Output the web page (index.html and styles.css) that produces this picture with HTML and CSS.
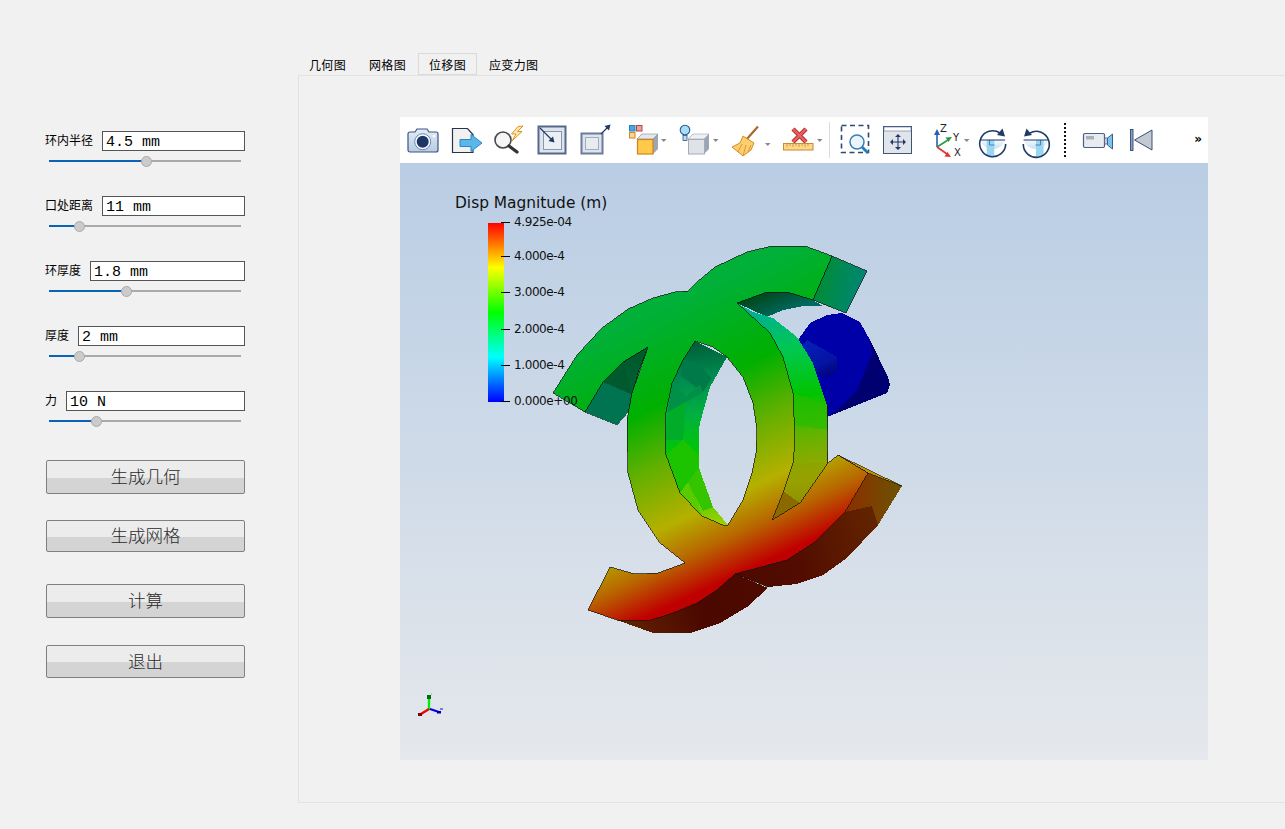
FILE: index.html
```html
<!DOCTYPE html>
<html lang="zh">
<head>
<meta charset="utf-8">
<title>位移图</title>
<link rel="stylesheet" href="styles.css">
</head>
<body>
<div class="app">
  <aside class="panel">
    <div class="param">
      <div class="param-head"><label class="param-label">环内半径</label><div class="value">4.5 mm</div></div>
      <div class="slider"><div class="slider-fill" style="width:97px"></div><div class="slider-knob" style="left:97px"></div></div>
    </div>
    <div class="param">
      <div class="param-head"><label class="param-label">口处距离</label><div class="value">11 mm</div></div>
      <div class="slider"><div class="slider-fill" style="width:30.5px"></div><div class="slider-knob" style="left:30.5px"></div></div>
    </div>
    <div class="param">
      <div class="param-head"><label class="param-label">环厚度</label><div class="value">1.8 mm</div></div>
      <div class="slider"><div class="slider-fill" style="width:77px"></div><div class="slider-knob" style="left:77px"></div></div>
    </div>
    <div class="param">
      <div class="param-head"><label class="param-label">厚度</label><div class="value">2 mm</div></div>
      <div class="slider"><div class="slider-fill" style="width:30.5px"></div><div class="slider-knob" style="left:30.5px"></div></div>
    </div>
    <div class="param">
      <div class="param-head"><label class="param-label">力</label><div class="value">10 N</div></div>
      <div class="slider"><div class="slider-fill" style="width:47.5px"></div><div class="slider-knob" style="left:47.5px"></div></div>
    </div>
    <button class="action action-geo">生成几何</button>
    <button class="action action-mesh">生成网格</button>
    <button class="action action-calc">计算</button>
    <button class="action action-quit">退出</button>
  </aside>

  <main class="tabs">
    <nav class="tab-bar">
      <div class="tab">几何图</div>
      <div class="tab">网格图</div>
      <div class="tab tab-active">位移图</div>
      <div class="tab tab-last">应变力图</div>
    </nav>
    <section class="pane">
      <div class="viewer">
        <div class="toolbar">
          <div class="tool">
            <svg width="43" height="46" viewBox="0 0 43 46"><defs><linearGradient id="camBody" x1="0" y1="0" x2="0" y2="1"><stop offset="0" stop-color="#e4edf7"/><stop offset="1" stop-color="#b7cbe3"/></linearGradient></defs><path d="M9 15h5l2-3h10l2 3h7a2 2 0 0 1 2 2v16a2 2 0 0 1-2 2H9a2 2 0 0 1-2-2V17a2 2 0 0 1 2-2z" fill="url(#camBody)" stroke="#3a5580" stroke-width="1.200"/><circle cx="21.700" cy="24.700" r="8" fill="#fff" stroke="#6585b0"/><circle cx="21.700" cy="24.700" r="6" fill="#1b3768"/><circle cx="33" cy="19" r="1.300" fill="#fff"/></svg>
          </div>
          <div class="tool">
            <svg width="43" height="46" viewBox="0 0 43 46"><path d="M8.500 11.500h15l5.500 6v18h-20.500z" fill="#f1f1f1" stroke="#26344c" stroke-width="1.200"/><path d="M16 22.500h11v-5l11 8.500-11 8.500v-5h-11z" fill="#5bb7ea" stroke="#2a86c8"/></svg>
          </div>
          <div class="tool">
            <svg width="43" height="46" viewBox="0 0 43 46"><path d="M31 9.500l-6.500 7.500h4.500l-4 7 10-9.500h-4.500l5.500-5.500z" fill="#ffe9a8" stroke="#e0922a" stroke-width="1"/><circle cx="16" cy="23" r="8" fill="#f6f6f6" stroke="#484848" stroke-width="1.600"/><path d="M22 29l8 6" stroke="#333" stroke-width="3.200" stroke-linecap="round"/></svg>
          </div>
          <div class="tool">
            <svg width="43" height="46" viewBox="0 0 43 46"><rect x="8.500" y="9.500" width="27" height="27" fill="#dfe4ea" stroke="#55688c" stroke-width="2"/><rect x="13.500" y="14.500" width="18" height="18" fill="#eceff3" stroke="#8797b0"/><path d="M10 11l12 12" stroke="#1f3a68" stroke-width="1.200"/><path d="M24.500 25.500l-6-1.500 4.500-4.500z" fill="#1f3a68"/></svg>
          </div>
          <div class="tool">
            <svg width="43" height="46" viewBox="0 0 43 46"><rect x="8.500" y="16.500" width="21" height="20" fill="#dfe4ea" stroke="#6a7c9c" stroke-width="2"/><rect x="12.500" y="20.500" width="13" height="12" fill="#e8ebef" stroke="#a0acbe"/><path d="M28 17l7-7" stroke="#1f3a68" stroke-width="1.200"/><path d="M37.500 7.500l-1.500 6-4.500-4.500z" fill="#1f3a68"/></svg>
          </div>
          <div class="tool tool-wide">
            <svg width="52" height="46" viewBox="0 0 52 46"><rect x="13.500" y="8.500" width="5.500" height="5.500" fill="#4aa8e0" stroke="#2f7fb8"/><rect x="20.500" y="8.500" width="5.500" height="5.500" fill="#e8a0a0" stroke="#b04848"/><rect x="13.500" y="15.500" width="5.500" height="5.500" fill="#fbd38a" stroke="#c98a30"/><path d="M21 22l5-5h16v15l-5 5z" fill="#9aa6b4"/><path d="M21 22l5-5h16l-5 5z" fill="#e4e8ee" stroke="#7a8698" stroke-width=".6"/><rect x="21.500" y="22.500" width="15.500" height="14.500" fill="#ffc94a" stroke="#d5801e" stroke-width="1.200"/><path d="M45 22h5.500l-2.750 3z" fill="#888"/></svg>
          </div>
          <div class="tool tool-wide">
            <svg width="52" height="46" viewBox="0 0 52 46"><path d="M20 22l5-5h16v15l-5 5z" fill="#9aa6b4"/><path d="M20 22l5-5h16l-5 5z" fill="#eef0f3" stroke="#9aa6b4" stroke-width=".6"/><rect x="20.500" y="22.500" width="16" height="14.500" fill="#dfe2e7" stroke="#a2abb8"/><circle cx="17" cy="13" r="4.800" fill="#a9ddf5" stroke="#1f5b8f" stroke-width="1.100"/><rect x="15" y="18.500" width="4" height="5" fill="#cfd6de" stroke="#1f5b8f" stroke-width=".8"/><path d="M45 22h5.500l-2.750 3z" fill="#888"/></svg>
          </div>
          <div class="tool tool-wide">
            <svg width="52" height="46" viewBox="0 0 52 46"><path d="M38 9.500L26 23" stroke="#a8682a" stroke-width="2.200"/><path d="M23 19l11 7-3 7-8 6-11-9 8-4z" fill="#fbcf6e" stroke="#d88a28"/><path d="M23 39l3-11M18 35l4-8M28 35l3-7" stroke="#d88a28" stroke-width=".8"/><path d="M45 26h5.500l-2.750 3z" fill="#888"/></svg>
          </div>
          <div class="tool tool-wide">
            <svg width="52" height="46" viewBox="0 0 52 46"><path d="M21 12l13 13M34 12L21 25" stroke="#b83030" stroke-width="4.400"/><path d="M21 12l13 13M34 12L21 25" stroke="#e86060" stroke-width="2.400"/><rect x="11.500" y="26.500" width="29.500" height="6.500" fill="#fbd88c" stroke="#c98a30"/><path d="M15 27v3M18 27v2M21 27v3M24 27v2M27 27v3M30 27v2M33 27v3M36 27v2" stroke="#c98a30" stroke-width=".8"/><path d="M45 22h5.500l-2.750 3z" fill="#888"/></svg>
          </div>
          <div class="sep"></div>
          <div class="tool">
            <svg width="43" height="46" viewBox="0 0 43 46"><rect x="8.500" y="8.500" width="27" height="27" fill="none" stroke="#2f4a72" stroke-width="1.600" stroke-dasharray="5 3.500"/><circle cx="24" cy="25" r="7" fill="#eaf5fb" stroke="#3a7fb5" stroke-width="1.500"/><path d="M29 30l6 6" stroke="#2a7dbb" stroke-width="2.800"/></svg>
          </div>
          <div class="tool">
            <svg width="43" height="46" viewBox="0 0 43 46"><rect x="7.500" y="9.500" width="28" height="27" fill="#e1e5eb" stroke="#3f5578"/><rect x="8" y="10" width="27" height="4" fill="#fff" stroke="#5f7396" stroke-width=".6"/><path d="M22 18v14M15 25h14" stroke="#1f3a68" stroke-width="1.100"/><path d="M22 17l-3 3h6zM22 33l-3-3h6zM14 25l3-3v6zM30 25l-3-3v6z" fill="#1f3a68"/></svg>
          </div>
          <div class="tool tool-axes">
            <svg width="46" height="46" viewBox="0 0 46 46"><path d="M12 30V16" stroke="#2a5fb0" stroke-width="1.600"/><path d="M12 12l-3 6h6z" fill="#2a5fb0"/><path d="M12 30l11-7" stroke="#2a9a4a" stroke-width="1.600"/><path d="M27 20l-6.500.5 3 4.500z" fill="#2a9a4a"/><path d="M12 30l10 7" stroke="#e03030" stroke-width="1.600"/><path d="M26 40l-6.500-.5 3-4.500z" fill="#e03030"/><text class="axis-letter" x="15" y="14.500">Z</text><text class="axis-letter" x="28" y="24">Y</text><text class="axis-letter" x="29" y="39">X</text><path d="M39 22h5.500l-2.750 3z" fill="#888"/></svg>
          </div>
          <div class="tool tool-rot">
            <svg width="44" height="46" viewBox="0 0 44 46"><defs><linearGradient id="rotFill" x1="0" y1="0" x2="0" y2="1"><stop offset="0" stop-color="#f4fafd"/><stop offset="1" stop-color="#c4e3f4"/></linearGradient></defs><path d="M9.300 23a13 13 0 0 0 24.800 0z" fill="url(#rotFill)"/><path d="M15.700 23h7.600v16.900a13 13 0 0 1-7.600-1.700z" fill="#9ad6f2"/><path d="M18.500 23v5h5" fill="none" stroke="#2f6fa8" stroke-width=".8"/><path d="M29 16A13 13 0 1 0 34.700 27" fill="none" stroke="#1f3a68" stroke-width="1.600"/><path d="M9.300 23h24.800" stroke="#1f3a68" stroke-width="1"/><path d="M34 19.500l-8-1.500 5.500-6.500z" fill="#1f3a68"/></svg>
          </div>
          <div class="tool tool-rot">
            <svg width="44" height="46" viewBox="0 0 44 46"><path d="M8.600 23a13 13 0 0 0 24.800 0z" fill="url(#rotFill)"/><path d="M21 23h7.600v15.200a13 13 0 0 1-7.600 1.700z" fill="#9ad6f2"/><path d="M25.500 23v5h-5" fill="none" stroke="#2f6fa8" stroke-width=".8"/><path d="M15 16A13 13 0 1 1 8.300 27" fill="none" stroke="#1f3a68" stroke-width="1.600"/><path d="M8.600 23h24.800" stroke="#1f3a68" stroke-width="1"/><path d="M9 19.500l8-1.500-5.500-6.500z" fill="#1f3a68"/></svg>
          </div>
          <div class="sep-dotted"></div>
          <div class="tool tool-cam">
            <svg width="43" height="46" viewBox="0 0 43 46"><rect x="7.500" y="16.500" width="21" height="14" rx="1.500" fill="#e8ebf0" stroke="#4a5f82" stroke-width="1.200"/><rect x="10" y="19" width="8" height="3.500" fill="#a8b0bc"/><rect x="28.500" y="21" width="3" height="6" fill="#c4ccd8" stroke="#4a5f82" stroke-width=".8"/><path d="M31.500 21l5-4v15l-5-4z" fill="#7cc4ec" stroke="#3a5f92"/></svg>
          </div>
          <div class="tool">
            <svg width="43" height="46" viewBox="0 0 43 46"><rect x="11.500" y="12.500" width="2.500" height="21" fill="#8ba0c0" stroke="#2f4a72" stroke-width=".9"/><path d="M33 13L15.500 23 33 33z" fill="#c2c9d3" stroke="#3a5278"/></svg>
          </div>
          <div class="more">»</div>
        </div>
        <div class="viewport">
          <svg class="scene" width="808" height="597" viewBox="400 163 808 597">
            <defs>
              <linearGradient id="face" gradientUnits="userSpaceOnUse" x1="235" y1="508" x2="378" y2="816">
                <stop offset="0" stop-color="#00b038"/>
                <stop offset=".25" stop-color="#00b000"/>
                <stop offset=".41" stop-color="#60b000"/>
                <stop offset=".585" stop-color="#b5b000"/>
                <stop offset=".69" stop-color="#b86800"/>
                <stop offset=".8" stop-color="#c00000"/>
                <stop offset="1" stop-color="#a00000"/>
              </linearGradient>
              <linearGradient id="bar" x1="0" y1="1" x2="0" y2="0">
                <stop offset="0" stop-color="#0000ff"/>
                <stop offset=".25" stop-color="#00ffff"/>
                <stop offset=".5" stop-color="#00ff00"/>
                <stop offset=".75" stop-color="#ffff00"/>
                <stop offset="1" stop-color="#ff0000"/>
              </linearGradient>
              <linearGradient id="cap" gradientUnits="userSpaceOnUse" x1="820" y1="280" x2="860" y2="290">
                <stop offset="0" stop-color="#008c38"/>
                <stop offset="1" stop-color="#008672"/>
              </linearGradient>
              <linearGradient id="under" gradientUnits="userSpaceOnUse" x1="770" y1="292" x2="780" y2="316">
                <stop offset="0" stop-color="#004a20"/>
                <stop offset="1" stop-color="#006a60"/>
              </linearGradient>
              <linearGradient id="leftwall" gradientUnits="userSpaceOnUse" x1="625" y1="355" x2="610" y2="425">
                <stop offset="0" stop-color="#005a2a"/>
                <stop offset=".55" stop-color="#00603a"/>
                <stop offset="1" stop-color="#008062"/>
              </linearGradient>
              <linearGradient id="innerwall" gradientUnits="userSpaceOnUse" x1="690" y1="345" x2="710" y2="525">
                <stop offset="0" stop-color="#00603a"/>
                <stop offset=".18" stop-color="#008a50"/>
                <stop offset=".38" stop-color="#00b040"/>
                <stop offset=".6" stop-color="#00c800"/>
                <stop offset=".85" stop-color="#50cc00"/>
                <stop offset="1" stop-color="#a0d000"/>
              </linearGradient>
              <linearGradient id="rightwall" gradientUnits="userSpaceOnUse" x1="765" y1="310" x2="790" y2="520">
                <stop offset="0" stop-color="#00b090"/>
                <stop offset=".2" stop-color="#00c850"/>
                <stop offset=".42" stop-color="#00c400"/>
                <stop offset=".6" stop-color="#60b400"/>
                <stop offset=".82" stop-color="#a4a400"/>
                <stop offset="1" stop-color="#806000"/>
              </linearGradient>
              <linearGradient id="shadow" gradientUnits="userSpaceOnUse" x1="620" y1="600" x2="900" y2="500">
                <stop offset="0" stop-color="#602000"/>
                <stop offset=".25" stop-color="#4a0800"/>
                <stop offset=".6" stop-color="#520c00"/>
                <stop offset="1" stop-color="#682c00"/>
              </linearGradient>
              <linearGradient id="endcap" gradientUnits="userSpaceOnUse" x1="850" y1="495" x2="895" y2="495">
                <stop offset="0" stop-color="#8a3000"/>
                <stop offset="1" stop-color="#6e5000"/>
              </linearGradient>
              <linearGradient id="hub" gradientUnits="userSpaceOnUse" x1="812" y1="340" x2="830" y2="378">
                <stop offset="0" stop-color="#0420b8"/>
                <stop offset=".6" stop-color="#0414a4"/>
                <stop offset="1" stop-color="#00007a"/>
              </linearGradient>
            </defs>

            <g class="mesh">
              <polygon points="798,340 810,323 827,315 842,313 860,322 870,340 888,377 890,385 887,393 827,417" fill="#0000a8"/>
              <polygon points="870,340 872,355 857,390 840,408 827,417 887,393 890,385 888,377" fill="#000070"/>
              <polygon points="807,340 837,357 837,370 827,378 817,373 802,345" fill="url(#hub)"/>

              <polygon points="832,256 867,271 846,313 813,300" fill="url(#cap)" stroke="#111" stroke-width=".7"/>
              <polygon points="737,303 767,292 787,292 813,300 823,306 803,306 783,310 767,317" fill="url(#under)"/>

              <polygon points="585,412 603,382 623,362 648,347 638,373 631,400 628,412 617,425" fill="url(#leftwall)" stroke="#111" stroke-width=".7"/>
              <polygon points="603,382 631,394 628,412 617,425 585,412" fill="#007450"/>
              <polygon points="603,382 623,362 632,394" fill="#005a2e"/>

              <polygon points="695,341 727,357 710,387 700,423 699,430 699,468 713,507 728,525 725,526 702,516 680,493 666,455 665,430 665,417 672,383 683,360" fill="url(#innerwall)"/>
              <polygon points="683,360 695,362 712,378 703,392 681,376" fill="#007a48"/>
              <polygon points="672,383 686,396 700,385 703,392 686,402 668,412" fill="#009048"/>
              <polygon points="668,412 686,402 683,440 665,440" fill="#00ac28"/>
              <polygon points="666,455 683,440 699,455 699,468 688,482 680,493" fill="#1cc400"/>
              <polygon points="680,493 688,482 702,516" fill="#58cc00"/>
              <polygon points="688,482 699,468 713,507 703,511" fill="#34c400"/>

              <polygon points="737,303 753,312 773,318 797,337 813,363 827,405 827,440 828,463 800,503 772,520 783,493 793,463 795,440 793,393 783,357 770,333" fill="url(#rightwall)"/>
              <polygon points="793,393 827,405 828,430 795,425" fill="#28bc00" opacity=".7"/>
              <polygon points="793,463 828,463 800,503 784,492" fill="#90a000" opacity=".6"/>
              <polygon points="784,492 800,503 772,520" fill="#8a6a00"/>
              <path d="M827 405V463" fill="none" stroke="#111" stroke-width=".8"/>

              <polygon points="617,620 653,633 690,633 720,623 747,607 768,588 735,574" fill="url(#shadow)"/>
              <polygon points="735,574 768,587 797,584 823,575 847,558 878,525 902,486 868,473 845,512 815,542 787,560" fill="url(#shadow)"/>
              <polygon points="868,473 902,486 878,525 872,506 845,512" fill="url(#endcap)"/>
              <polygon points="838,455 868,473 902,486" fill="#c09400" stroke="#111" stroke-width=".6"/>
              <path d="M735 574l33 13" fill="none" stroke="#111" stroke-width=".6"/>

              <path class="front" fill="url(#face)" fill-rule="evenodd" d="M553 393L577 355 602 328 628 309 653 298 675 292 688 291 697 282 715 267 747 252 772 246 805 246 832 256 813 300 787 292 767 292 737 303 770 333 783 357 793 393 795 440 793 463 783 493 772 520 800 503 828 463 838 455 868 473 845 512 815 542 787 560 735 574 717 590 697 603 673 613 648 621 617 620 588 610 610 567 635 574 658 573 685 563 660 543 638 510 628 473 627 430 627 420 632 393 648 347 623 362 603 382 585 412Z M695 341L713 347 727 357 743 377 753 403 756 423 757 430 756 453 752 473 743 500 728 525 725 526 702 516 680 493 666 455 665 430 665 417 672 383 683 360Z"/>
            </g>

            <text class="legend-title" x="455" y="208">Disp Magnitude (m)</text>
            <rect x="488" y="223" width="16" height="179" fill="url(#bar)"/>
            <path d="M501 222.500h9M501 256.500h9M501 292.500h9M501 329.500h9M501 365.500h9M501 401.500h9" stroke="#000" stroke-width="1"/>
            <text class="legend-label" x="514" y="226">4.925e-04</text>
            <text class="legend-label" x="514" y="260">4.000e-4</text>
            <text class="legend-label" x="514" y="296">3.000e-4</text>
            <text class="legend-label" x="514" y="333">2.000e-4</text>
            <text class="legend-label" x="514" y="369">1.000e-4</text>
            <text class="legend-label" x="514" y="405">0.000e+00</text>

            <g class="orient">
              <path d="M429 710V698" stroke="#00ee00" stroke-width="2.400"/>
              <path d="M427 699v-4h4v4z" fill="#006a10"/>
              <path d="M431 694h1" stroke="#30e030"/>
              <path d="M429 709l-8 5" stroke="#ee0000" stroke-width="2.400"/>
              <path d="M418 713h4v3h-4z" fill="#800000"/>
              <path d="M430 709l9 3" stroke="#0000ee" stroke-width="2.200"/>
              <path d="M437 711h4v2.500h-4z" fill="#0000a0"/>
              <path d="M440 709h3" stroke="#1010d0"/>
            </g>
          </svg>
        </div>
      </div>
    </section>
  </main>
</div>
</body>
</html>
```
FILE: styles.css
```css
* { box-sizing: border-box; }

html, body {
  margin: 0;
  height: 100%;
  background: #f1f1f1;
  overflow: hidden;
}

.app {
  display: flex;
  width: 1285px;
  height: 829px;
  font-family: "Noto Sans CJK SC", "Liberation Sans", sans-serif;
  color: #000;
}

/* left column */
.panel {
  flex: 0 0 298px;
  display: flex;
  flex-direction: column;
  padding: 131px 53px 0 45px;
}

.param { height: 65px; }

.param-head {
  display: flex;
  align-items: center;
  gap: 9px;
  height: 20px;
}

.param-label {
  margin-top: -2px;
  font-size: 12px;
  line-height: 20px;
  white-space: nowrap;
}

.value {
  flex: 1;
  height: 20px;
  padding-left: 3px;
  background: #fff;
  border: 1px solid #555;
  font-family: "Liberation Mono", "Noto Sans CJK SC", monospace;
  font-size: 15px;
  line-height: 21px;
  overflow: hidden;
  white-space: pre;
}

.slider {
  position: relative;
  width: 192px;
  height: 2px;
  margin: 9px 0 0 4px;
  background: #a9a9a9;
}

.slider-fill {
  height: 100%;
  background: #0b63b5;
}

.slider-knob {
  position: absolute;
  top: -4.500px;
  width: 11px;
  height: 11px;
  margin-left: -5.500px;
  border: 1px solid #aaa;
  border-radius: 50%;
  background: #cbcbcb;
}

.action {
  display: block;
  width: 199px;
  margin-left: 1px;
  padding: 0 0 3px;
  border: 1px solid #808080;
  border-radius: 2px;
  background: linear-gradient(#ececec 0 52%, #d4d4d4 52% 100%);
  color: #2a2a2a;
  font-family: "Noto Sans CJK SC", sans-serif;
  font-size: 17.500px;
  font-weight: 300;
}

.action-geo  { height: 34px; margin-top: 4px; }
.action-mesh { height: 32px; margin-top: 26px; }
.action-calc { height: 34px; margin-top: 32px; }
.action-quit { height: 33px; margin-top: 27px; }

/* tabs */
.tabs {
  flex: 1;
  display: flex;
  flex-direction: column;
  padding: 53px 0 26px;
  min-width: 0;
}

.tab-bar {
  display: flex;
  height: 22px;
}

.tab {
  width: 60px;
  padding-left: 11px;
  font-size: 12px;
  letter-spacing: .33px;
  line-height: 23px;
  white-space: nowrap;
}

.tab-active {
  width: 59px;
  padding-left: 10px;
  border: 1px solid #dadada;
  line-height: 21px;
}

.tab-last {
  width: auto;
  padding-left: 12px;
}

.pane {
  flex: 1;
  padding: 41px 76px 0 101px;
  border: 1px solid #e2e2e2;
  border-right: 0;
}

.viewer {
  display: flex;
  flex-direction: column;
  width: 808px;
  height: 643px;
}

.toolbar {
  display: flex;
  align-items: stretch;
  flex: 0 0 46px;
  padding-left: 1px;
  background: #fff;
}

.tool {
  flex: 0 0 43px;
  height: 46px;
}

.tool svg { display: block; }

.tool-wide { flex-basis: 52px; }
.tool-axes { flex-basis: 46px; margin-left: 6px; }
.tool-rot  { flex-basis: 44px; }
.tool-cam  { margin-left: 10px; }

.sep {
  flex: 0 0 1px;
  margin: 5px 3px 5px 5px;
  background: #dcdcdc;
}

.sep-dotted {
  flex: 0 0 2px;
  margin: 6px 0 6px 5px;
  background: repeating-linear-gradient(#111 0 2px, transparent 2px 4px);
}

.more {
  margin-left: auto;
  padding-right: 6px;
  font-family: "DejaVu Sans", sans-serif;
  font-size: 12px;
  font-weight: 700;
  line-height: 44px;
}

.axis-letter {
  font-family: "DejaVu Sans", sans-serif;
  font-size: 10px;
  fill: #222;
}

.viewport {
  flex: 1;
  background: linear-gradient(#b9cde4, #e5e8ec);
}

.scene { display: block; }

.mesh { shape-rendering: crispEdges; }

.front {
  stroke: #111;
  stroke-width: .7;
}

.legend-title {
  font-family: "DejaVu Sans", sans-serif;
  font-size: 15.400px;
  fill: #111;
}

.legend-label {
  font-family: "DejaVu Sans", sans-serif;
  font-size: 12px;
  letter-spacing: -.4px;
  fill: #111;
}
```
